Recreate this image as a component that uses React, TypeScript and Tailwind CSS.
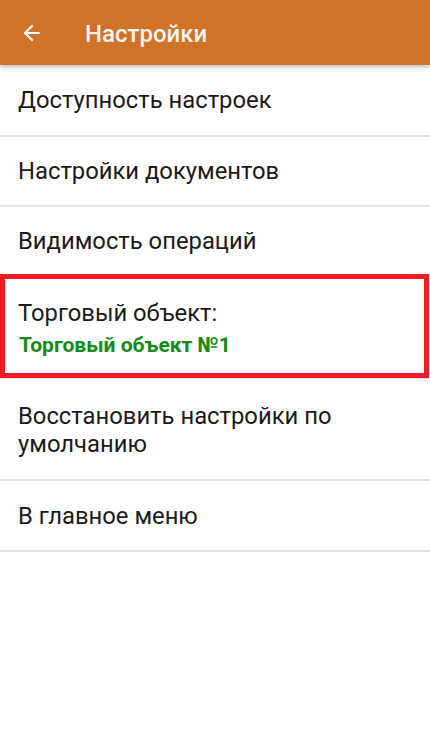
import { ArrowLeft } from "lucide-react";

const font = { fontFamily: "Roboto, 'Noto Sans', sans-serif" };

function Divider() {
    return <div className="h-[2px] bg-[#e3e3e3]" />;
}

function Row({ children, className = "" }: { children: React.ReactNode; className?: string }) {
    return (
        <>
            <div className={`flex flex-col justify-center px-[18px] pt-[2px] ${className}`}>{children}</div>
            <Divider />
        </>
    );
}

export default function App() {
    return (
        <div className="min-h-[739px] w-[430px] bg-white" style={font}>
            {/* Toolbar */}
            <div className="relative z-10 flex h-[65px] items-center bg-[#d07228] shadow-[0_2px_4px_rgba(0,0,0,0.25)]">
                <ArrowLeft className="ml-[20px] h-[24px] w-[24px] text-white" strokeWidth={2.2} />
                <h1 className="ml-[41px] pt-[3px] text-[24px] font-medium text-[#f4f4f4]">Настройки</h1>
            </div>

            {/* Menu */}
            <div className="flex flex-col text-[23.8px] text-[#1a1a1a]">
                <Row className="h-[70px]">Доступность настроек</Row>
                <Row className="h-[68px]">Настройки документов</Row>
                <Row className="h-[68px]">Видимость операций</Row>
                <div className="relative">
                    <Row className="h-[100px] gap-[4px]">
                        <span className="leading-[30px]">Торговый объект:</span>
                        <span className="pl-[1px] text-[21px] font-bold leading-[26px] text-[#148c14]">Торговый объект №1</span>
                    </Row>
                    {/* highlight */}
                    <div className="pointer-events-none absolute left-0 top-[-3px] h-[104px] w-[429px] border-[5px] border-[#ee1c25]" />
                </div>
                <Row className="h-[100px] leading-[28px]">
                    <span>Восстановить настройки по</span>
                    <span>умолчанию</span>
                </Row>
                <Row className="h-[69px]">В главное меню</Row>
            </div>
        </div>
    );
}
